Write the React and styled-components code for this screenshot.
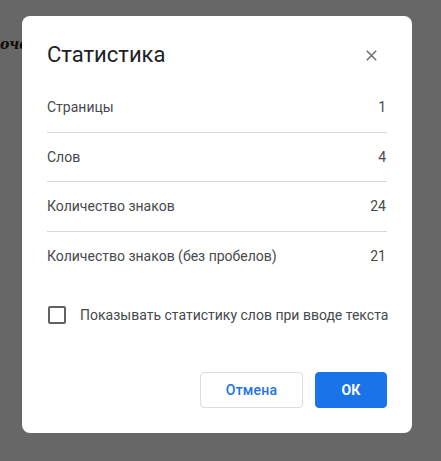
import styled, { createGlobalStyle } from "styled-components";

const GlobalStyle = createGlobalStyle`
  html, body {
    margin: 0;
    padding: 0;
    background: #676767;
  }
  body {
    font-family: Roboto, "Liberation Sans", sans-serif;
    -webkit-font-smoothing: antialiased;
  }
`;

const Page = styled.div`
  position: relative;
  width: 441px;
  height: 461px;
  overflow: hidden;
  background: #676767;
`;

// document text visible behind the dim overlay
const DocText = styled.p`
  margin: 0;
  padding: 35px 0 0 0;
  font-family: "DejaVu Serif", "Liberation Serif", serif;
  font-style: italic;
  font-weight: 700;
  font-size: 14px;
  line-height: 18px;
  color: #0d0d0d;
  white-space: nowrap;
`;

const Overlay = styled.div`
  position: absolute;
  inset: 0;
  display: flex;
  align-items: flex-start;
  padding: 16px 0 0 22px;
`;

const Dialog = styled.div`
  width: 390px;
  height: 417px;
  box-sizing: border-box;
  background: #fff;
  border-radius: 8px;
  padding: 24px 25px 25px 25px;
  display: flex;
  flex-direction: column;
`;

const Header = styled.div`
  display: flex;
  align-items: center;
  justify-content: space-between;
  height: 30px;
  margin-bottom: 13px;
`;

const Title = styled.h2`
  margin: 0;
  font-family: Roboto, "Liberation Sans", sans-serif;
  font-weight: 400;
  font-size: 22px;
  line-height: 30px;
  color: #202124;
`;

const CloseButton = styled.button`
  width: 24px;
  height: 24px;
  margin-right: 4px;
  padding: 0;
  border: none;
  background: none;
  display: flex;
  align-items: center;
  justify-content: center;
  color: #6b6e72;
  cursor: pointer;
`;

const Row = styled.div`
  display: flex;
  align-items: center;
  justify-content: space-between;
  height: 49.5px;
  box-sizing: border-box;
  border-bottom: ${({ $last }) => ($last ? "none" : "1px solid #d6d8dc")};
  font-size: 14px;
  color: #46494d;
`;

const Value = styled.span`
  padding-right: 1px;
`;

const CheckRow = styled.label`
  display: flex;
  align-items: center;
  gap: 14px;
  margin-top: 25px;
  padding-left: 1px;
  font-size: 14px;
  color: #46494d;
  white-space: nowrap;
`;

const Box = styled.span`
  width: 18px;
  height: 18px;
  box-sizing: border-box;
  border: 2px solid #5f6368;
  border-radius: 2px;
  flex: none;
`;

const Actions = styled.div`
  margin-top: auto;
  display: flex;
  justify-content: flex-end;
  gap: 12px;
`;

const Button = styled.button`
  height: 36px;
  box-sizing: border-box;
  border-radius: 4px;
  font-family: Roboto, "Liberation Sans", sans-serif;
  font-size: 14px;
  font-weight: ${({ $primary }) => ($primary ? 700 : 500)};
  letter-spacing: 0.2px;
  cursor: pointer;
  width: ${({ $primary }) => ($primary ? "72px" : "103px")};
  border: 1px solid ${({ $primary }) => ($primary ? "#1a73e8" : "#dadce0")};
  background: ${({ $primary }) => ($primary ? "#1a73e8" : "#fff")};
  color: ${({ $primary }) => ($primary ? "#fff" : "#1a73e8")};
`;

const stats = [
  { label: "Страницы", value: "1" },
  { label: "Слов", value: "4" },
  { label: "Количество знаков", value: "24" },
  { label: "Количество знаков (без пробелов)", value: "21" },
];

export default function App() {
  return (
    <Page>
      <GlobalStyle />
      <DocText>оче</DocText>
      <Overlay>
        <Dialog>
          <Header>
            <Title>Статистика</Title>
            <CloseButton aria-label="Закрыть">
              <svg width="11" height="11" viewBox="0 0 11 11">
                <path
                  d="M0.8 0.8 L10.2 10.2 M10.2 0.8 L0.8 10.2"
                  stroke="currentColor"
                  strokeWidth="1.5"
                  fill="none"
                />
              </svg>
            </CloseButton>
          </Header>
          {stats.map((s, i) => (
            <Row key={s.label} $last={i === stats.length - 1}>
              <span>{s.label}</span>
              <Value>{s.value}</Value>
            </Row>
          ))}
          <CheckRow>
            <Box />
            Показывать статистику слов при вводе текста
          </CheckRow>
          <Actions>
            <Button>Отмена</Button>
            <Button $primary>ОК</Button>
          </Actions>
        </Dialog>
      </Overlay>
    </Page>
  );
}
